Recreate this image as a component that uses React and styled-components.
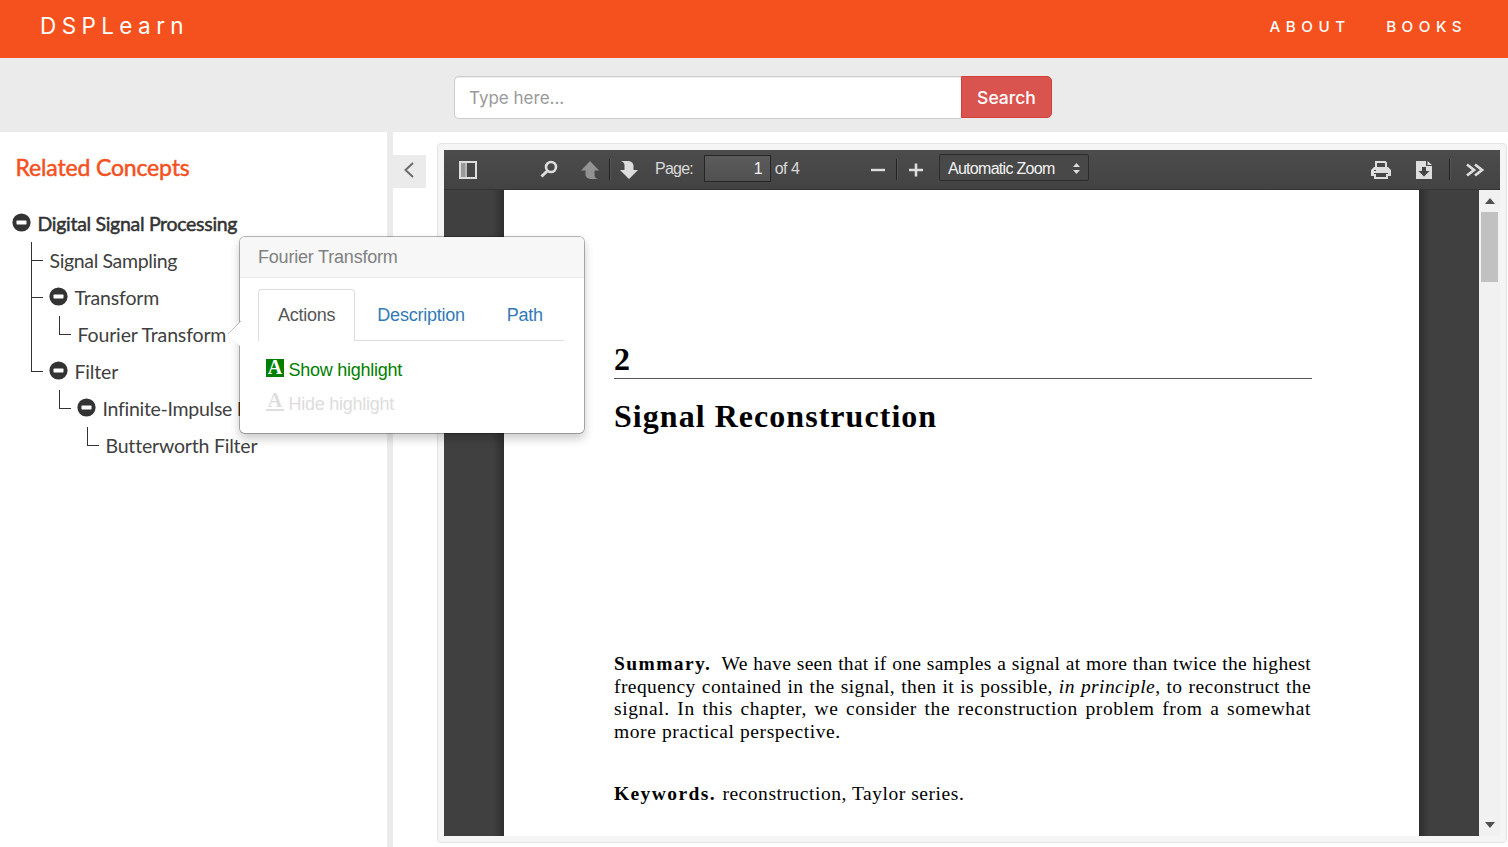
import React from 'react';
import styled, { createGlobalStyle } from 'styled-components';

const GlobalStyle = createGlobalStyle`
  *, *::before, *::after { box-sizing: border-box; }
  body { margin: 0; background: #fff; overflow: hidden; }
  ul { list-style: none; margin: 0; padding: 0; }
`;

const Page = styled.div`
  display: flex;
  flex-direction: column;
  height: 847px;
  overflow: hidden;
  position: relative;
  font-family: Lato, sans-serif;
`;

/* ---------- top bars ---------- */

const NavBar = styled.header`
  display: flex;
  flex: none;
  justify-content: space-between;
  height: 58px;
  padding: 0 41px 5px 40px;
  align-items: center;
  background: #f4511e;
  color: #fff;
  font-family: Inter, sans-serif;
`;

const Brand = styled.div`
  padding-bottom: 2px;
  font-size: 22.5px;
  letter-spacing: 5.4px;
`;

const NavLinks = styled.nav`
  display: flex;
  gap: 35.5px;
`;

const NavLink = styled.span`
  font-size: 15.2px;
  font-weight: 500;
  letter-spacing: 5.5px;
`;

const SearchBar = styled.div`
  display: flex;
  flex: none;
  height: 74px;
  padding: 18px 0 0 454px;
  background: #ebebeb;
  font-family: Inter, sans-serif;
`;

const SearchInput = styled.div`
  width: 507px;
  height: 43px;
  padding: 0 14px;
  line-height: 42px;
  border: 1px solid #ccc;
  border-right: 0;
  border-radius: 5px 0 0 5px;
  background: #fff;
  box-shadow: inset 0 1px 1px rgba(0, 0, 0, 0.075);
  color: #999;
  font-size: 17px;
`;

const SearchButton = styled.div`
  width: 91px;
  height: 42px;
  line-height: 42px;
  border: 1px solid #d43f3a;
  border-radius: 0 5px 5px 0;
  background: #d9534f;
  color: #fff;
  font-size: 17.5px;
  font-weight: 500;
  text-align: center;
`;

/* ---------- sidebar ---------- */

const Main = styled.main`
  display: flex;
  flex: 1;
  min-height: 0;
`;

const Sidebar = styled.aside`
  width: 393px;
  flex: none;
  border-right: 6px solid #ebebeb;
`;

const SidebarTitle = styled.h2`
  margin: 0;
  padding: 20px 0 0 15.5px;
  height: 73px;
  line-height: 30px;
  font-size: 23px;
  font-weight: 400;
  letter-spacing: -0.15px;
  color: #f4511e;
  -webkit-text-stroke: 0.5px #f4511e;
`;

const TreeRow = styled.div`
  display: flex;
  align-items: flex-start;
  height: 37px;
  line-height: 37px;
  white-space: nowrap;
  color: #404040;
  font-size: 19.5px;
  letter-spacing: ${p => p.$track || -0.15}px;
`;

const RootRow = styled(TreeRow)`
  padding-left: 12px;
  color: #333;
  -webkit-text-stroke: 0.5px #333;
`;

const Branches = styled.ul`
  margin-left: ${p => (p.$top ? 31 : 27)}px;
`;

const Branch = styled.li`
  border-left: 1px solid ${p => (p.$last ? 'transparent' : '#333')};
`;

const Connector = styled.span`
  flex: none;
  width: 12px;
  height: 19px;
  margin: 0 ${p => (p.$parent ? 6 : 6.5)}px 0 -1px;
  border-bottom: 1px solid #333;
  border-left: 1px solid #333;
`;

const MinusIcon = styled.svg`
  flex: none;
  width: 19px;
  height: 19px;
  margin: 8px 6.5px 0 0;
`;

const Minus = () => (
  <MinusIcon viewBox="0 0 19 19">
    <circle cx="9.5" cy="9.5" r="9.1" fill="#333" />
    <rect x="4.5" y="7.6" width="10" height="3.8" rx="0.6" fill="#fff" />
  </MinusIcon>
);

const TREE = [
  { label: 'Signal Sampling', track: -0.35 },
  { label: 'Transform', items: [{ label: 'Fourier Transform' }] },
  {
    label: 'Filter',
    items: [{ label: 'Infinite-Impulse F', track: -0.28, items: [{ label: 'Butterworth Filter', track: -0.2 }] }],
  },
];

function Tree({ items, top }) {
  return (
    <Branches $top={top}>
      {items.map((item, i) => (
        <Branch key={item.label} $last={i === items.length - 1}>
          <TreeRow $track={item.track}>
            <Connector $parent={Boolean(item.items)} />
            {item.items && <Minus />}
            {item.label}
          </TreeRow>
          {item.items && <Tree items={item.items} />}
        </Branch>
      ))}
    </Branches>
  );
}

/* ---------- document viewer ---------- */

const Toggle = styled.div`
  display: flex;
  flex: none;
  align-items: center;
  justify-content: center;
  width: 33px;
  height: 33px;
  padding: 0 2px 3px 0;
  margin: 23px 11px 0 0;
  background: #ebebeb;
`;

const Well = styled.section`
  display: flex;
  flex-direction: column;
  width: 1070px;
  height: 700px;
  margin-top: 11px;
  padding: 6px;
  border: 1px solid #e3e3e3;
  border-radius: 4px;
  background: #f5f5f5;
`;

const Toolbar = styled.div`
  display: flex;
  flex: none;
  align-items: center;
  height: 40px;
  padding: 0 15px 0 14px;
  background: linear-gradient(#4c4c4c, #434343);
  border-bottom: 1px solid #353535;
  color: #d9d9d9;
  font: 16px 'Liberation Sans', Arial, sans-serif;
`;

const ToolIcon = styled.svg`
  flex: none;
  width: 20px;
  height: 20px;
  margin-left: ${p => p.$gap || 0}px;
  opacity: ${p => (p.$dim ? 0.5 : 1)};
`;

const Separator = styled.span`
  width: 1px;
  height: 21px;
  margin-left: ${p => p.$gap}px;
  background: #222;
  box-shadow: 1px 0 0 rgba(255, 255, 255, 0.08);
`;

const ToolText = styled.span`
  margin-left: ${p => p.$gap}px;
  width: ${p => p.$width}px;
  white-space: nowrap;
  letter-spacing: ${p => p.$track}px;
  padding-bottom: 1px;
`;

const PageInput = styled.span`
  width: 67px;
  height: 27px;
  margin-bottom: 3px;
  padding-right: 7px;
  line-height: 26px;
  text-align: right;
  color: #f2f2f2;
  border: 1px solid #262626;
  background: linear-gradient(#5c5c5c, #505050);
`;

const ZoomSelect = styled.span`
  display: flex;
  align-items: center;
  justify-content: space-between;
  width: 150px;
  height: 27px;
  margin: 0 0 4px 13px;
  padding: 2px 8px 0 7.5px;
  border: 1px solid #2c2c2c;
  border-radius: 2px;
  background: #484848;
  color: #f2f2f2;
  letter-spacing: -0.7px;
  white-space: nowrap;
`;

const Viewport = styled.div`
  display: flex;
  flex: 1;
  background: #404040;
`;

const Gutter = styled.div`
  width: 60px;
  background: linear-gradient(to ${p => p.$to}, #404040 82%, #2e2e2e);
`;

const Sheet = styled.article`
  width: 915px;
  padding: 154px 107px 0 110px;
  background: #fff;
  color: #000;
  font-family: 'Liberation Serif', serif;
`;

const ChapterNumber = styled.div`
  height: 35px;
  line-height: 30px;
  font-size: 32px;
  font-weight: 700;
  border-bottom: 1px solid #555;
  width: 698px;
`;

const ChapterTitle = styled.h1`
  margin: 19px 0 0;
  height: 37px;
  line-height: 36px;
  font-size: 32px;
  font-weight: 700;
  letter-spacing: 1.04px;
  white-space: nowrap;
`;

const Paragraph = styled.div`
  width: 697px;
  margin-top: ${p => p.$gap}px;
`;

const Line = styled.div`
  height: 22.7px;
  line-height: 22.7px;
  font-size: 19.5px;
  white-space: nowrap;
  letter-spacing: ${p => p.$track || 0}px;
  text-align-last: ${p => (p.$open ? 'left' : 'justify')};
`;

const Lead = styled.b`
  letter-spacing: 1.4px;
  margin-right: ${p => p.$gap}px;
`;

const ScrollTrack = styled.div`
  display: flex;
  flex-direction: column;
  align-items: center;
  justify-content: space-between;
  width: 21px;
  padding: 8px 0;
  background: #f1f1f1;
`;

const ScrollTop = styled.div`
  display: flex;
  flex-direction: column;
  align-items: center;
  gap: 8px;
`;

const Thumb = styled.div`
  width: 17px;
  height: 70px;
  background: #c1c1c1;
`;

const Arrow = styled.svg`
  display: block;
  width: 10px;
  height: 6px;
`;

/* ---------- popover ---------- */

const Popover = styled.div`
  position: absolute;
  left: 239px;
  top: 236px;
  width: 346px;
  height: 198px;
  border: 1px solid rgba(0, 0, 0, 0.28);
  border-radius: 6px;
  background: #fff;
  background-clip: padding-box;
  box-shadow: 0 5px 10px rgba(0, 0, 0, 0.2);
  font: 18px 'Liberation Sans', Arial, sans-serif;
`;

const PopoverTip = styled.svg`
  position: absolute;
  left: -13px;
  top: 84px;
  width: 14px;
  height: 26px;
`;

const PopoverTitle = styled.div`
  height: 41px;
  padding-left: 18px;
  line-height: 40px;
  border-bottom: 1px solid #ebebeb;
  border-radius: 5px 5px 0 0;
  background: #f7f7f7;
  color: #808080;
  letter-spacing: -0.2px;
`;

const Tabs = styled.div`
  display: flex;
  width: 306px;
  height: 52px;
  margin: 11px 0 0 18px;
  border-bottom: 1px solid #ddd;
`;

const Tab = styled.div`
  height: 52px;
  line-height: 50px;
  padding: 0 18.5px 0 19px;
  margin-right: 2.5px;
  letter-spacing: -0.24px;
  color: ${p => (p.$active ? '#555' : '#337ab7')};
  border: 1px solid ${p => (p.$active ? '#ddd' : 'transparent')};
  border-bottom: 0;
  border-radius: 4px 4px 0 0;
  background: ${p => (p.$active ? '#fff' : 'none')};
`;

const Actions = styled.div`
  padding: 12px 0 0 26px;
`;

const Action = styled.div`
  display: flex;
  align-items: center;
  gap: 4.5px;
  height: 34px;
  letter-spacing: -0.25px;
  color: ${p => (p.$disabled ? '#ddd' : 'green')};
`;

const LetterBadge = styled.span`
  width: 18px;
  height: 18px;
  margin-bottom: 4px;
  line-height: 17px;
  text-align: center;
  font-family: 'Liberation Serif', serif;
  font-weight: 700;
  font-size: 20px;
  letter-spacing: 0;
  ${p => (p.$filled
    ? 'background: green; color: #fff;'
    : 'border-bottom: 2px solid #ddd; line-height: 14px;')}
`;

export default function App() {
  return (
    <>
      <GlobalStyle />
      <Page>
        <NavBar>
          <Brand>DSPLearn</Brand>
          <NavLinks>
            <NavLink>ABOUT</NavLink>
            <NavLink>BOOKS</NavLink>
          </NavLinks>
        </NavBar>
        <SearchBar>
          <SearchInput>Type here...</SearchInput>
          <SearchButton>Search</SearchButton>
        </SearchBar>
        <Main>
          <Sidebar>
            <SidebarTitle>Related Concepts</SidebarTitle>
            <RootRow $track={-0.3}><Minus />Digital Signal Processing</RootRow>
            <Tree items={TREE} top />
          </Sidebar>
          <Toggle>
            <svg width="12" height="16" viewBox="0 0 12 16">
              <path d="M10 1 2.5 8l7.5 7" fill="none" stroke="#6b6b6b" strokeWidth="2" />
            </svg>
          </Toggle>
          <Well>
            <Toolbar>
              <ToolIcon viewBox="0 0 20 20">
                <path d="M2 2h16v16H2z" fill="none" stroke="#ddd" strokeWidth="2" />
                <path d="M3 3h4v14H3z" fill="#999" />
                <path d="M8 3v14" stroke="#ddd" strokeWidth="1.5" />
              </ToolIcon>
              <ToolIcon $gap={61} viewBox="0 0 20 20">
                <circle cx="12" cy="7" r="5" fill="none" stroke="#ddd" strokeWidth="2.6" />
                <path d="M8.2 11 2.5 16.5" stroke="#ddd" strokeWidth="3" />
              </ToolIcon>
              <ToolIcon $gap={21} $dim viewBox="0 0 20 20">
                <path d="M10 1 1 10.5h4.500V15q.5 3.500 5 4h7.500q-3.500-1-3.500-4v-4.500H19z" fill="#ddd" />
              </ToolIcon>
              <Separator $gap={9} />
              <ToolIcon $gap={9} viewBox="0 0 20 20">
                <path d="M10 19 19 10h-4.500V5.500q-.5-4-5-4.500H2q3.500 1 3.500 4.500V10H1z" fill="#ddd" />
              </ToolIcon>
              <ToolText $gap={16} $width={49} $track={-0.75}>Page:</ToolText>
              <PageInput>1</PageInput>
              <ToolText $gap={4} $width={94} $track={-0.5}>of 4</ToolText>
              <ToolIcon viewBox="0 0 20 20">
                <path d="M3 10h14" stroke="#ddd" strokeWidth="2.4" />
              </ToolIcon>
              <Separator $gap={8} />
              <ToolIcon $gap={9} viewBox="0 0 20 20">
                <path d="M3 10h14M10 3.5v13" stroke="#ddd" strokeWidth="2.6" />
              </ToolIcon>
              <ZoomSelect>
                Automatic Zoom
                <svg width="7" height="11" viewBox="0 0 7 11">
                  <path d="M0 4h7L3.5 0zM0 7h7L3.5 11z" fill="#ddd" />
                </svg>
              </ZoomSelect>
              <ToolIcon $gap={282} viewBox="0 0 20 20">
                <path d="M5 7V2h9l1 1v4" fill="none" stroke="#ddd" strokeWidth="2" />
                <path d="M3 7h14l3 3v6h-3v-3H3v3H0v-6z" fill="#ddd" />
                <path d="M4 14v4h12v-4" fill="none" stroke="#ddd" strokeWidth="2" />
                <path d="M3 10.5h2" stroke="#444" strokeWidth="1.2" />
              </ToolIcon>
              <ToolIcon $gap={23} viewBox="0 0 20 20">
                <path d="M2 1h10v5h6v13H2z" fill="#ddd" />
                <path d="M13.5 1v4H18z" fill="#ddd" />
                <path d="M8 7h4v4h3.500L10 16.500 4.500 11H8z" fill="#444" />
              </ToolIcon>
              <Separator $gap={15} />
              <ToolIcon $gap={15} viewBox="0 0 20 20">
                <path d="m2 4.5 7 5.500-7 5.500M10 4.500l7 5.500-7 5.500" fill="none" stroke="#ddd" strokeWidth="2.8" />
              </ToolIcon>
            </Toolbar>
            <Viewport>
              <Gutter $to="right" />
              <Sheet>
                <ChapterNumber>2</ChapterNumber>
                <ChapterTitle>Signal Reconstruction</ChapterTitle>
                <Paragraph $gap={218}>
                  <Line $track={0.3}><Lead $gap={5}>Summary.</Lead> We have seen that if one samples a signal at more than twice the highest</Line>
                  <Line $track={0.42}>frequency contained in the signal, then it is possible, <i>in principle</i>, to reconstruct the</Line>
                  <Line $track={0.6}>signal. In this chapter, we consider the reconstruction problem from a somewhat</Line>
                  <Line $open $track={0.6}>more practical perspective.</Line>
                </Paragraph>
                <Paragraph $gap={39}>
                  <Line $open $track={0.54}><Lead $gap={1}>Keywords.</Lead> reconstruction, Taylor series.</Line>
                </Paragraph>
              </Sheet>
              <Gutter $to="left" />
              <ScrollTrack>
                <ScrollTop>
                  <Arrow viewBox="0 0 10 6"><path d="M0 6h10L5 0z" fill="#505050" /></Arrow>
                  <Thumb />
                </ScrollTop>
                <Arrow viewBox="0 0 10 6"><path d="M0 0h10L5 6z" fill="#505050" /></Arrow>
              </ScrollTrack>
            </Viewport>
          </Well>
        </Main>
        <Popover>
          <PopoverTip viewBox="0 0 14 26">
            <path d="M14 0 1 13l13 13z" fill="#fff" />
            <path d="M14 0 1 13" stroke="#bbb" fill="none" />
          </PopoverTip>
          <PopoverTitle>Fourier Transform</PopoverTitle>
          <Tabs>
            <Tab $active>Actions</Tab>
            <Tab>Description</Tab>
            <Tab>Path</Tab>
          </Tabs>
          <Actions>
            <Action><LetterBadge $filled>A</LetterBadge>Show highlight</Action>
            <Action $disabled><LetterBadge>A</LetterBadge>Hide highlight</Action>
          </Actions>
        </Popover>
      </Page>
    </>
  );
}
